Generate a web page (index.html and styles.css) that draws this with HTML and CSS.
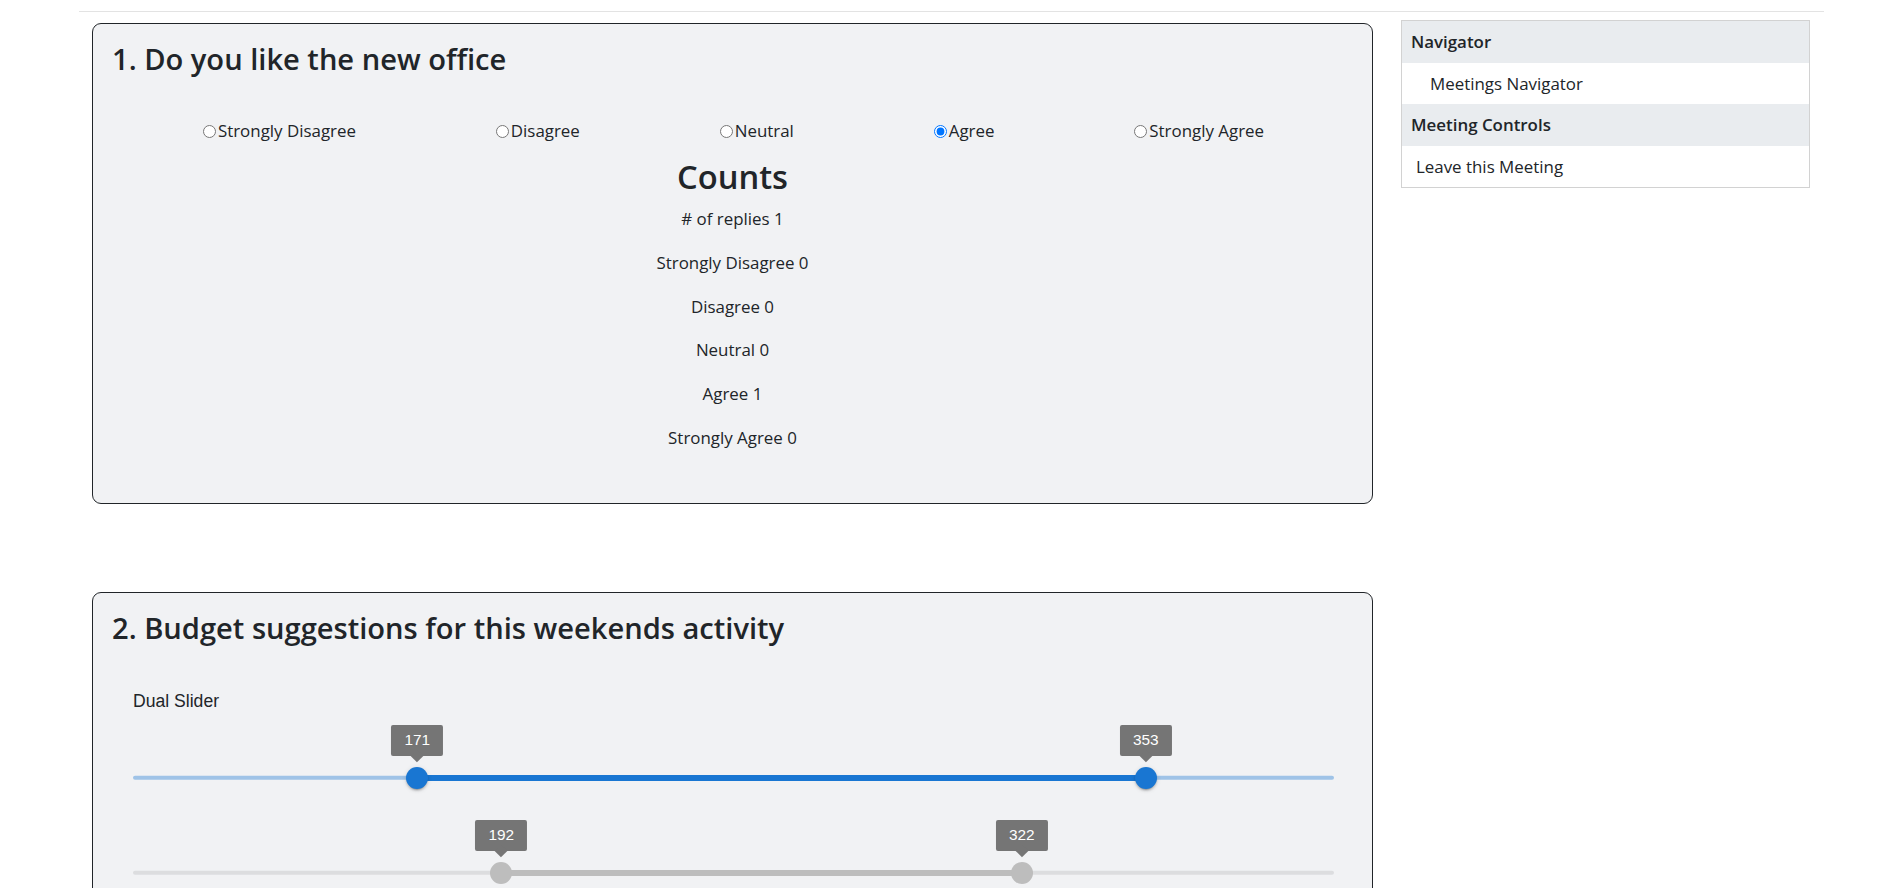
FILE: index.html
```html
<!DOCTYPE html>
<html lang="en">
<head>
<meta charset="utf-8">
<title>Meeting</title>
<link rel="stylesheet" href="styles.css">
</head>
<body>
<div class="page">
  <div class="rule"></div>
  <div class="layout">
    <main class="main">
      <section class="card card-q1">
        <h3 class="q-title">1. Do you like the new office</h3>
        <div class="inner options">
          <label class="opt"><input type="radio" name="q1">Strongly Disagree</label>
          <label class="opt"><input type="radio" name="q1">Disagree</label>
          <label class="opt"><input type="radio" name="q1">Neutral</label>
          <label class="opt"><input type="radio" name="q1" checked>Agree</label>
          <label class="opt"><input type="radio" name="q1">Strongly Agree</label>
        </div>
        <h2 class="counts-title">Counts</h2>
        <div class="counts">
          <p># of replies 1</p>
          <p>Strongly Disagree 0</p>
          <p>Disagree 0</p>
          <p>Neutral 0</p>
          <p>Agree 1</p>
          <p>Strongly Agree 0</p>
        </div>
      </section>

      <section class="card card-q2">
        <h3 class="q-title">2. Budget suggestions for this weekends activity</h3>
        <div class="inner">
          <div class="slider-caption">Dual Slider</div>
          <div class="slider slider-active">
            <div class="rail"></div>
            <div class="track" style="left:23.667%;width:60.667%"></div>
            <div class="thumb" style="left:23.667%"><span class="vlabel">171</span></div>
            <div class="thumb" style="left:84.333%"><span class="vlabel">353</span></div>
          </div>
          <div class="slider slider-disabled">
            <div class="rail"></div>
            <div class="track" style="left:30.667%;width:43.333%"></div>
            <div class="thumb" style="left:30.667%"><span class="vlabel">192</span></div>
            <div class="thumb" style="left:74%"><span class="vlabel">322</span></div>
          </div>
        </div>
      </section>
    </main>

    <aside class="sidebar">
      <div class="side-head">Navigator</div>
      <div class="side-item side-item-deep">Meetings Navigator</div>
      <div class="side-head">Meeting Controls</div>
      <div class="side-item">Leave this Meeting</div>
    </aside>
  </div>
</div>
</body>
</html>
```

FILE: styles.css
```css
* { box-sizing: border-box; }

html, body {
  margin: 0;
  padding: 0;
  background: #ffffff;
}

body {
  font-family: "Open Sans", "Noto Sans", sans-serif;
  font-size: 16.9px;
  line-height: 26.4px;
  color: #212529;
}

.page {
  padding: 11px 73px 0 79px;
}

.rule {
  height: 1px;
  background: #e3e3e3;
}

.layout {
  display: flex;
  align-items: flex-start;
  gap: 28px;
  padding: 8px 14px 0 13px;
}

.main {
  width: 1281px;
  flex: none;
  padding-top: 3px;
}

/* ---------- cards ---------- */
.card {
  background: #f1f2f4;
  border: 1px solid #212529;
  border-radius: 9px;
  padding: 15px 19px 52px;
}

.card-q2 {
  margin-top: 88px;
  padding-bottom: 80px;
}

.q-title {
  margin: 0;
  padding-top: 1.5px;
  font-size: 29.1px;
  line-height: 37px;
  font-weight: 600;
}

.inner {
  padding: 0 19px 0 21px;
}

/* ---------- radio options ---------- */
.options {
  display: flex;
  justify-content: space-around;
  margin-top: 40.5px;
  line-height: 26px;
}

.opt {
  white-space: nowrap;
}

.opt input {
  margin: 0 2px 0 0;
  width: 13px;
  height: 13px;
  vertical-align: -1px;
}

/* ---------- counts ---------- */
.counts-title {
  margin: 13px 0 0;
  text-align: center;
  font-size: 32.7px;
  line-height: 40px;
  font-weight: 600;
}

.counts {
  margin-top: 9px;
  text-align: center;
}

.counts p {
  margin: 0 0 17.4px;
  line-height: 26.4px;
}

.counts p:last-child {
  margin-bottom: 0;
}

/* ---------- sliders ---------- */
.slider-caption {
  margin-top: 44.5px;
  font-family: "Liberation Sans", Arial, sans-serif;
  font-size: 17.6px;
  line-height: 20px;
  color: #212529;
}

.slider {
  position: relative;
  height: 22px;
  margin-top: 55.5px;
}

.slider + .slider {
  margin-top: 73px;
}

.rail {
  position: absolute;
  left: 0;
  right: 0;
  top: 50%;
  height: 4.4px;
  transform: translateY(-50%);
  border-radius: 3px;
}

.track {
  position: absolute;
  top: 50%;
  height: 6px;
  transform: translateY(-50%);
  border-radius: 3px;
}

.thumb {
  position: absolute;
  top: 50%;
  width: 22px;
  height: 22px;
  border-radius: 50%;
  transform: translate(-50%, -50%);
}

.slider-active .rail { background: #9fc3e7; }
.slider-active .track { background: #1976d2; }
.slider-active .thumb {
  background: #1976d2;
  box-shadow: 0 3px 1px -2px rgba(0,0,0,0.2), 0 2px 2px 0 rgba(0,0,0,0.14), 0 1px 5px 0 rgba(0,0,0,0.12);
}

.slider-disabled .rail { background: #dcdddf; }
.slider-disabled .track { background: #bdbdbd; }
.slider-disabled .thumb { background: #bdbdbd; }

.vlabel {
  position: absolute;
  left: 50%;
  bottom: calc(100% + 11px);
  transform: translateX(-50%);
  padding: 0 13.2px;
  height: 30.8px;
  line-height: 30.8px;
  background: #757575;
  color: #ffffff;
  border-radius: 2px;
  font-family: "Liberation Sans", Arial, sans-serif;
  font-size: 15.4px;
  white-space: nowrap;
}

.vlabel::before {
  content: "";
  position: absolute;
  left: 50%;
  bottom: 0;
  width: 8.8px;
  height: 8.8px;
  background: #757575;
  transform: translate(-50%, 50%) rotate(45deg);
}

/* ---------- sidebar ---------- */
.sidebar {
  width: 409px;
  flex: none;
  border: 1px solid #d2d2d2;
  background: #ffffff;
}

.side-head {
  background: #e9ecef;
  font-weight: 600;
  height: 41.5px;
  line-height: 41.5px;
  padding-left: 9px;
}

.side-item {
  height: 41.5px;
  line-height: 41.5px;
  padding-left: 14px;
}

.side-item-deep {
  padding-left: 28px;
}
```
